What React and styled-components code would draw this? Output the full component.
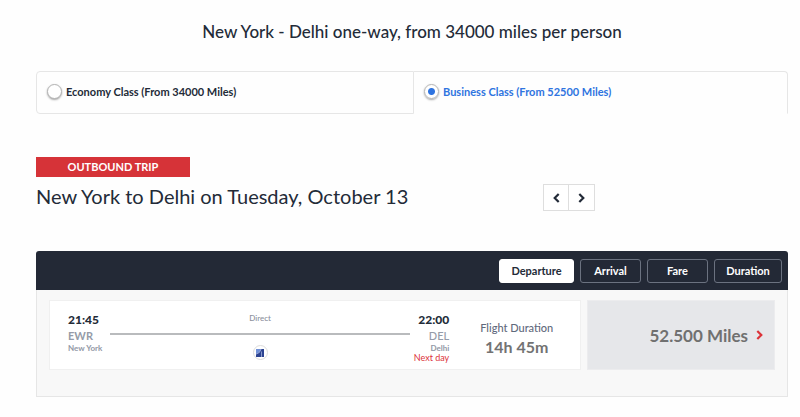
import React, { useState } from "react";
import styled, { createGlobalStyle } from "styled-components";

const Global = createGlobalStyle`
  * { box-sizing: border-box; }
  body { margin: 0; background: #fefefe; color: #232b38; font-family: Lato, "Open Sans", sans-serif; }
  button, input { font: inherit; margin: 0; }
`;

const Page = styled.main`
  padding: 20px 12px 20px 36px;
`;

const Title = styled.h1`
  margin: 0 0 27px;
  font-size: 17px;
  line-height: 24px;
  font-weight: 500;
  text-align: center;
`;

const ClassTabs = styled.div`
  display: grid;
  grid-template-columns: 378fr 374fr;
`;

const ClassTab = styled.label`
  display: flex;
  align-items: center;
  gap: 4px;
  height: 43px;
  padding: 0 10px 2px;
  border: 1px solid #e6e6e6;
  font-size: 11px;
  font-weight: 700;
  color: ${(p) => (p.$active ? "#2f74e0" : "#232b38")};
  border-bottom-color: ${(p) => (p.$active ? "transparent" : "#e6e6e6")};
  &:first-child { border-radius: 4px 0 0 4px; }
  &:last-child { border-left: 0; border-radius: 0 4px 0 0; }
`;

const Radio = styled.input`
  appearance: none;
  width: 15px;
  height: 15px;
  border: 1px solid #b4b4b4;
  border-radius: 50%;
  background: #fff;
  box-shadow: 0 1px 2px rgba(0, 0, 0, 0.35);
  &:checked { background: radial-gradient(circle, #2f74e0 3px, #fff 4px); }
`;

const TripHeader = styled.section`
  margin: 43px 0 40px;
`;

const Badge = styled.div`
  width: 154px;
  background: #d63338;
  color: #fff;
  font-size: 11px;
  line-height: 20px;
  font-weight: 700;
  text-align: center;
`;

const TripRow = styled.div`
  display: flex;
  align-items: flex-start;
  margin-top: 7px;
`;

const TripTitle = styled.h2`
  flex: 0 0 507px;
  margin: 0;
  font-size: 20px;
  line-height: 24px;
  font-weight: 400;
`;

const DayButton = styled.button`
  display: grid;
  place-items: center;
  width: 26px;
  height: 27px;
  padding: 0;
  border: 1px solid #dedede;
  background: #fff;
  color: #232b38;
  & + & { border-left: 0; }
`;

const SortBar = styled.div`
  display: flex;
  justify-content: flex-end;
  gap: 6px;
  padding: 8px 6px 7px;
  background: #232936;
  border-radius: 3px 3px 0 0;
`;

const SortButton = styled.button`
  height: 24px;
  width: ${(p) => p.$width};
  padding: 0 0 2px;
  border: 1px solid ${(p) => (p.$active ? "#fff" : "#6b7280")};
  border-radius: 3px;
  background: ${(p) => (p.$active ? "#fff" : "transparent")};
  color: ${(p) => (p.$active ? "#232b38" : "#fff")};
  font-size: 11px;
  font-weight: 700;
`;

const Results = styled.div`
  display: grid;
  grid-template-columns: 533fr 188fr;
  gap: 6px;
  padding: 10px 12px 26px;
  border: 1px solid #e6e6e6;
  border-top: 0;
  background: #f8f8f8;
`;

const FlightCard = styled.article`
  display: grid;
  grid-template-columns: 42px 1fr 39px 131px;
  height: 70px;
  padding: 11px 0 0 18px;
  border: 1px solid #f0f0f0;
  background: #fff;
`;

const Stop = styled.div`
  display: flex;
  flex-direction: column;
  align-items: ${(p) => (p.$end ? "flex-end" : "flex-start")};
  white-space: nowrap;
`;

const Time = styled.time`
  font-size: 12px;
  line-height: 16px;
  font-weight: 900;
`;

const Code = styled.span`
  font-size: 11px;
  line-height: 15px;
  font-weight: ${(p) => (p.$strong ? 700 : 500)};
  color: #959ba8;
`;

const City = styled.span`
  font-size: 8px;
  line-height: 10px;
  font-weight: 700;
  color: #9298a6;
`;

const NextDay = styled.span`
  font-size: 9px;
  line-height: 10px;
  color: #dc3339;
`;

const Route = styled.div`
  display: flex;
  flex-direction: column;
  align-items: center;
  padding-top: 1px;
  font-size: 8px;
  line-height: 10px;
  color: #8b909c;
`;

const RouteLine = styled.div`
  width: 100%;
  height: 2px;
  margin: 10px 0;
  background: #b9bbbd;
`;

const RouteLabel = styled.span`
  font-weight: 500;
`;

const AirlineMark = styled.span`
  display: grid;
  place-items: center;
  width: 15px;
  height: 15px;
  border: 1px solid #dcdcdc;
  border-radius: 50%;
`;

const Duration = styled.div`
  padding: 8px 0 0 4px;
  text-align: center;
`;

const DurationLabel = styled.div`
  font-size: 11px;
  line-height: 16px;
  font-weight: 500;
  color: #5f697c;
`;

const DurationValue = styled.div`
  font-size: 16px;
  line-height: 22px;
  font-weight: 700;
  color: #737373;
`;

const FareButton = styled.button`
  display: flex;
  align-items: center;
  justify-content: flex-end;
  gap: 8px;
  padding: 0 11px 0 0;
  border: 1px solid #ececee;
  background: #e6e7ea;
  color: #707070;
  font-size: 17px;
  font-weight: 700;
`;

const Chevron = ({ left, color = "currentColor" }) => (
  <svg width="7" height="10" viewBox="0 0 7 10" fill="none" stroke={color} strokeWidth="2.2" aria-hidden="true">
    <path d={left ? "M5.7 1 1.7 5l4 4" : "M1.3 1l4 4-4 4"} />
  </svg>
);

const cabins = ["Economy Class (From 34000 Miles)", "Business Class (From 52500 Miles)"];
const sorts = [
  ["Departure", "75px"],
  ["Arrival", "61px"],
  ["Fare", "61px"],
  ["Duration", "68px"],
];

export default function App() {
  const [cabin, setCabin] = useState(1);
  const [sort, setSort] = useState("Departure");
  return (
    <Page>
      <Global />
      <Title>New York - Delhi one-way, from 34000 miles per person</Title>
      <ClassTabs>
        {cabins.map((name, i) => (
          <ClassTab key={name} $active={cabin === i}>
            <Radio type="radio" name="cabin" checked={cabin === i} onChange={() => setCabin(i)} />
            {name}
          </ClassTab>
        ))}
      </ClassTabs>
      <TripHeader>
        <Badge>OUTBOUND TRIP</Badge>
        <TripRow>
          <TripTitle>New York to Delhi on Tuesday, October 13</TripTitle>
          <DayButton aria-label="Previous day"><Chevron left /></DayButton>
          <DayButton aria-label="Next day"><Chevron /></DayButton>
        </TripRow>
      </TripHeader>
      <SortBar>
        {sorts.map(([name, width]) => (
          <SortButton key={name} $width={width} $active={sort === name} onClick={() => setSort(name)}>
            {name}
          </SortButton>
        ))}
      </SortBar>
      <Results>
        <FlightCard>
          <Stop>
            <Time>21:45</Time>
            <Code $strong>EWR</Code>
            <City>New York</City>
          </Stop>
          <Route>
            <RouteLabel>Direct</RouteLabel>
            <RouteLine />
            <AirlineMark>
              <svg width="8" height="8" viewBox="0 0 8 8" aria-hidden="true">
                <path fill="#2c4391" d="M0 0h8v8H0z" />
                <path fill="#6f8fd6" d="M0 0h5Q4 4 0 5z" />
                <path fill="none" stroke="#c3cfee" strokeWidth=".6" d="M0 5.2Q4.2 4.4 5.2 0M5.5 2.5V8" />
              </svg>
            </AirlineMark>
          </Route>
          <Stop $end>
            <Time>22:00</Time>
            <Code>DEL</Code>
            <City>Delhi</City>
            <NextDay>Next day</NextDay>
          </Stop>
          <Duration>
            <DurationLabel>Flight Duration</DurationLabel>
            <DurationValue>14h 45m</DurationValue>
          </Duration>
        </FlightCard>
        <FareButton>
          52.500 Miles
          <Chevron color="#dc3339" />
        </FareButton>
      </Results>
    </Page>
  );
}
